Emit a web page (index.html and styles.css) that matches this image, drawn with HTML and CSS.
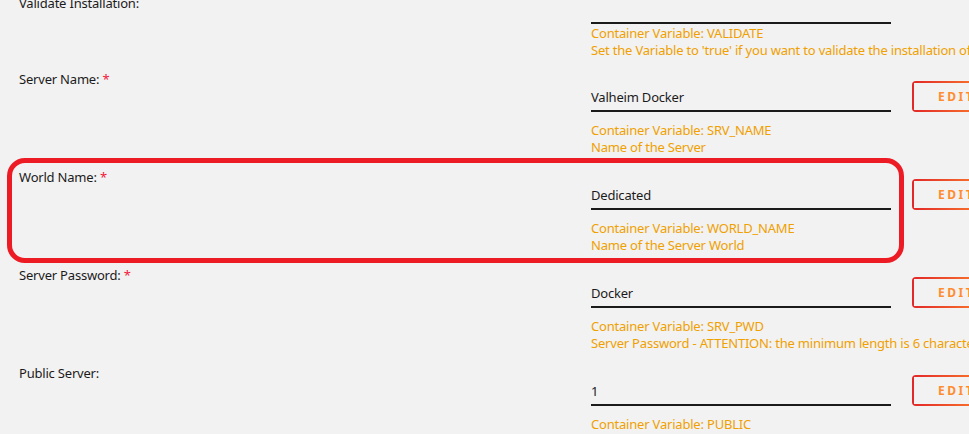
FILE: index.html
```html
<!DOCTYPE html>
<html>

<head>
    <title>Valheim Docker - Template</title>
    <link rel="stylesheet" href="styles.css">
</head>

<body>
    <form class="settings">
        <div class="row row-plain">
            <div class="row-label">Validate Installation:</div>
            <div class="row-body">
                <div class="field">
                    <div class="field-input field-empty"></div>
                </div>
                <div class="notes notes-tight">
                    <div>Container Variable: VALIDATE</div>
                    <div>Set the Variable to 'true' if you want to validate the installation of the game on every start/restart.</div>
                </div>
            </div>
        </div>

        <div class="row">
            <div class="row-label required">Server Name:</div>
            <div class="row-body">
                <div class="field">
                    <div class="field-input">Valheim Docker</div>
                    <button type="button" class="edit-btn">Edit</button>
                </div>
                <div class="notes">
                    <div>Container Variable: SRV_NAME</div>
                    <div>Name of the Server</div>
                </div>
            </div>
        </div>

        <div class="row row-marked">
            <div class="row-label required">World Name:</div>
            <div class="row-body">
                <div class="field">
                    <div class="field-input">Dedicated</div>
                    <button type="button" class="edit-btn">Edit</button>
                </div>
                <div class="notes">
                    <div>Container Variable: WORLD_NAME</div>
                    <div>Name of the Server World</div>
                </div>
            </div>
        </div>

        <div class="row">
            <div class="row-label required">Server Password:</div>
            <div class="row-body">
                <div class="field">
                    <div class="field-input">Docker</div>
                    <button type="button" class="edit-btn">Edit</button>
                </div>
                <div class="notes">
                    <div>Container Variable: SRV_PWD</div>
                    <div>Server Password - ATTENTION: the minimum length is 6 characters and the Password can't be part of the Server Name.</div>
                </div>
            </div>
        </div>

        <div class="row">
            <div class="row-label">Public Server:</div>
            <div class="row-body">
                <div class="field">
                    <div class="field-input">1</div>
                    <button type="button" class="edit-btn">Edit</button>
                </div>
                <div class="notes">
                    <div>Container Variable: PUBLIC</div>
                    <div>Set to '1' if you want the Server to be listed in the public Server list.</div>
                </div>
            </div>
        </div>
    </form>
</body>

</html>
```
FILE: styles.css
```css
body {
    margin: 0;
    background: #f2f2f2;
    color: #1c1b1b;
    font-family: "Noto Sans", "Open Sans", sans-serif;
    font-size: 13px;
    letter-spacing: -0.2px;
    overflow: hidden;
}

.settings {
    margin-top: -5px;
}

.row {
    display: flex;
    position: relative;
    padding-bottom: 13px;
}

.row-plain {
    padding-bottom: 12px;
}

.row-label {
    width: 591px;
    flex-shrink: 0;
    padding-left: 19px;
    box-sizing: border-box;
    line-height: 17px;
}

.required::after {
    content: " *";
    color: #f0203c;
}

.row-body {
    padding-top: 10px;
    white-space: nowrap;
}

.field {
    display: flex;
    align-items: flex-end;
}

.field-input {
    width: 300px;
    height: 31px;
    box-sizing: border-box;
    padding-top: 4px;
    line-height: 25px;
    border-bottom: 2px solid #1c1b1b;
}

.field-empty {
    height: 19px;
    padding: 0;
}

.edit-btn {
    margin-left: 21px;
    min-width: 86px;
    height: 31px;
    padding: 0 18px 1px 26px;
    text-align: left;
    font-family: inherit;
    font-size: 12px;
    font-weight: bold;
    letter-spacing: 2.5px;
    text-transform: uppercase;
    color: #ff8c2f;
    border: 0;
    border-radius: 4px;
    background:
        linear-gradient(90deg, #e22828, #ff8c2f) 0 0 / 100% 2px no-repeat,
        linear-gradient(90deg, #e22828, #ff8c2f) 0 100% / 100% 2px no-repeat,
        linear-gradient(#e22828, #e22828) 0 0 / 2px 100% no-repeat,
        linear-gradient(#ff8c2f, #ff8c2f) 100% 0 / 2px 100% no-repeat;
}

.notes {
    margin-top: 10px;
    line-height: 17px;
    color: #f0a000;
}

.notes-tight {
    margin-top: 1px;
}

/* highlight ring round the world name setting */
.row-marked::before {
    content: "";
    position: absolute;
    top: -11px;
    bottom: 4px;
    left: 7px;
    width: 897px;
    box-sizing: border-box;
    border: 5px solid #ed1c24;
    border-radius: 18px;
    pointer-events: none;
}
```
